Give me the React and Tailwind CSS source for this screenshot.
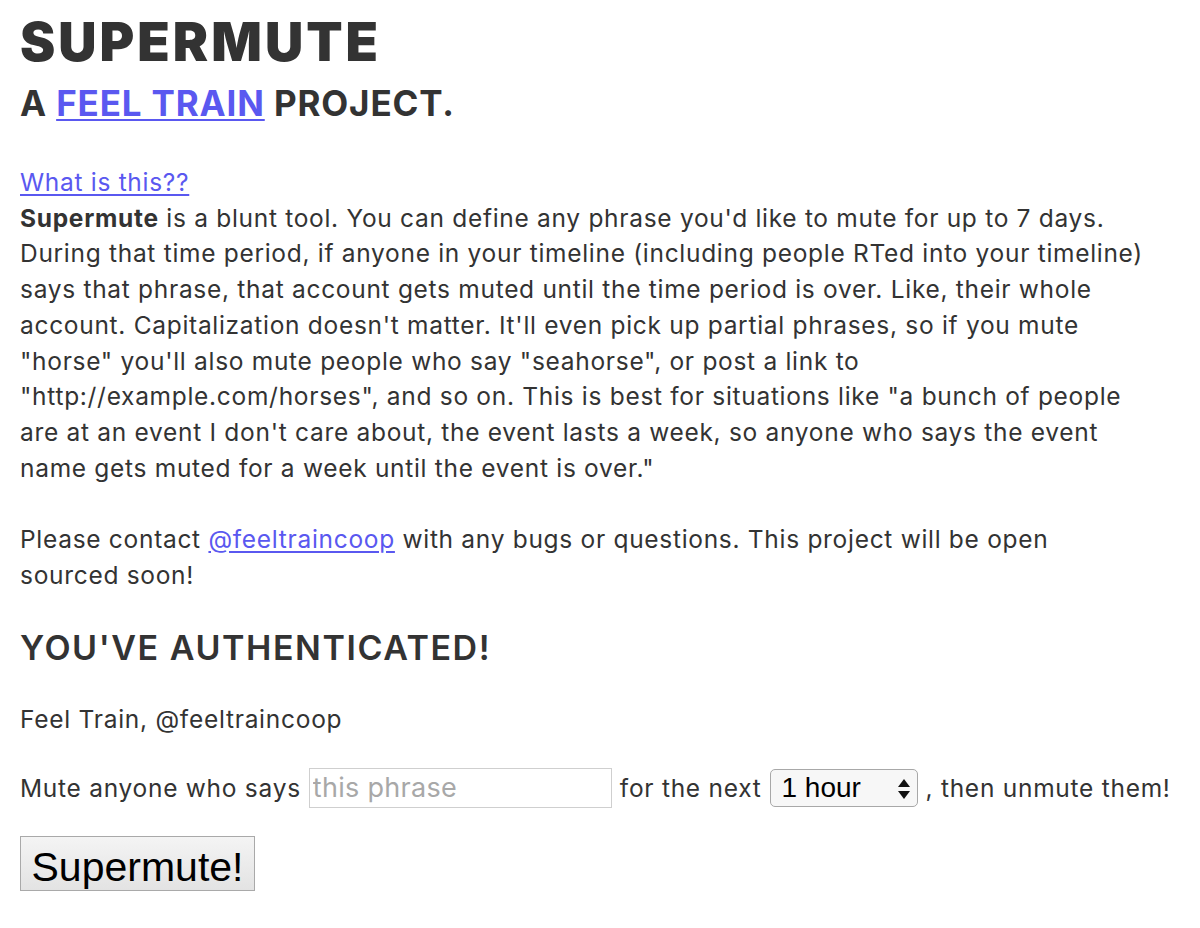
import React from "react";

export default function App() {
  const link = "text-[#5a58f0] underline decoration-[2px] underline-offset-[3px]";
  return (
    <div className="min-h-[928px] bg-white pl-[20px] pt-[12px] text-[#333] font-['Inter',sans-serif]">
      <h1 className="text-[53px] leading-[60px] font-black tracking-[3px]">SUPERMUTE</h1>
      <h2 className="mt-[11px] text-[35px] leading-[40px] font-bold tracking-[0.85px]">
        A <a href="#" className={link}>FEEL TRAIN</a> PROJECT.
      </h2>
      <div className="mt-[42px] text-[24.5px] leading-[35.7px] whitespace-nowrap tracking-[0.7px]">
        <a href="#" className="text-[#5a58f0] underline underline-offset-[3px]">What is this??</a>
        <div>
          <b className="font-bold">Supermute</b> is a blunt tool. You can define any phrase you'd like to mute for up to 7 days.
          <br />During that time period, if anyone in your timeline (including people RTed into your timeline)
          <br />says that phrase, that account gets muted until the time period is over. Like, their whole
          <br />account. Capitalization doesn't matter. It'll even pick up partial phrases, so if you mute
          <br />"horse" you'll also mute people who say "seahorse", or post a link to
          <br />"http://example.com/horses", and so on. This is best for situations like "a bunch of people
          <br />are at an event I don't care about, the event lasts a week, so anyone who says the event
          <br />name gets muted for a week until the event is over."
        </div>
        <div className="mt-[35.7px]">
          Please contact <a href="#" className="text-[#5a58f0] underline underline-offset-[3px]">@feeltraincoop</a> with any bugs or questions. This project will be open
          <br />sourced soon!
        </div>
      </div>
      <h3 className="mt-[35px] text-[34px] leading-[40px] font-semibold tracking-[1.55px]">YOU'VE AUTHENTICATED!</h3>
      <p className="mt-[33px] text-[24.5px] leading-[36px] tracking-[0.73px]">Feel Train, @feeltraincoop</p>
      <div className="mt-[31px] flex h-[40px] items-center gap-[8px] text-[24.5px] whitespace-nowrap tracking-[0.73px]">
        <span>Mute anyone who says</span>
        <input
          type="text"
          placeholder="this phrase"
          className="h-[40px] w-[303px] border border-[#cfcfcf] px-[3px] text-[27px] tracking-[0.3px] font-['Inter',sans-serif] placeholder:text-[#a8a8a8] outline-none"
        />
        <span>for the next</span>
        <div className="relative flex h-[38px] w-[148px] items-center rounded-[5px] border border-[#a8a8a8] bg-[#f7f7f7] pl-[11px] font-['Liberation_Sans',Arial,sans-serif] text-[28px] tracking-[0px] text-black">
          1 hour
          <svg className="absolute right-[6px] top-[8px]" width="14" height="22" viewBox="0 0 14 22">
            <path d="M7 1 L13 9 L1 9 Z" fill="#111" />
            <path d="M1 13 L13 13 L7 21 Z" fill="#111" />
          </svg>
        </div>
        <span>, then unmute them!</span>
      </div>
      <button className="mt-[28px] h-[55px] w-[235px] border border-[#a9a9a9] bg-gradient-to-b from-[#f4f4f4] to-[#e3e3e3] font-['Liberation_Sans',Arial,sans-serif] text-[41px] text-black">
        Supermute!
      </button>
    </div>
  );
}
